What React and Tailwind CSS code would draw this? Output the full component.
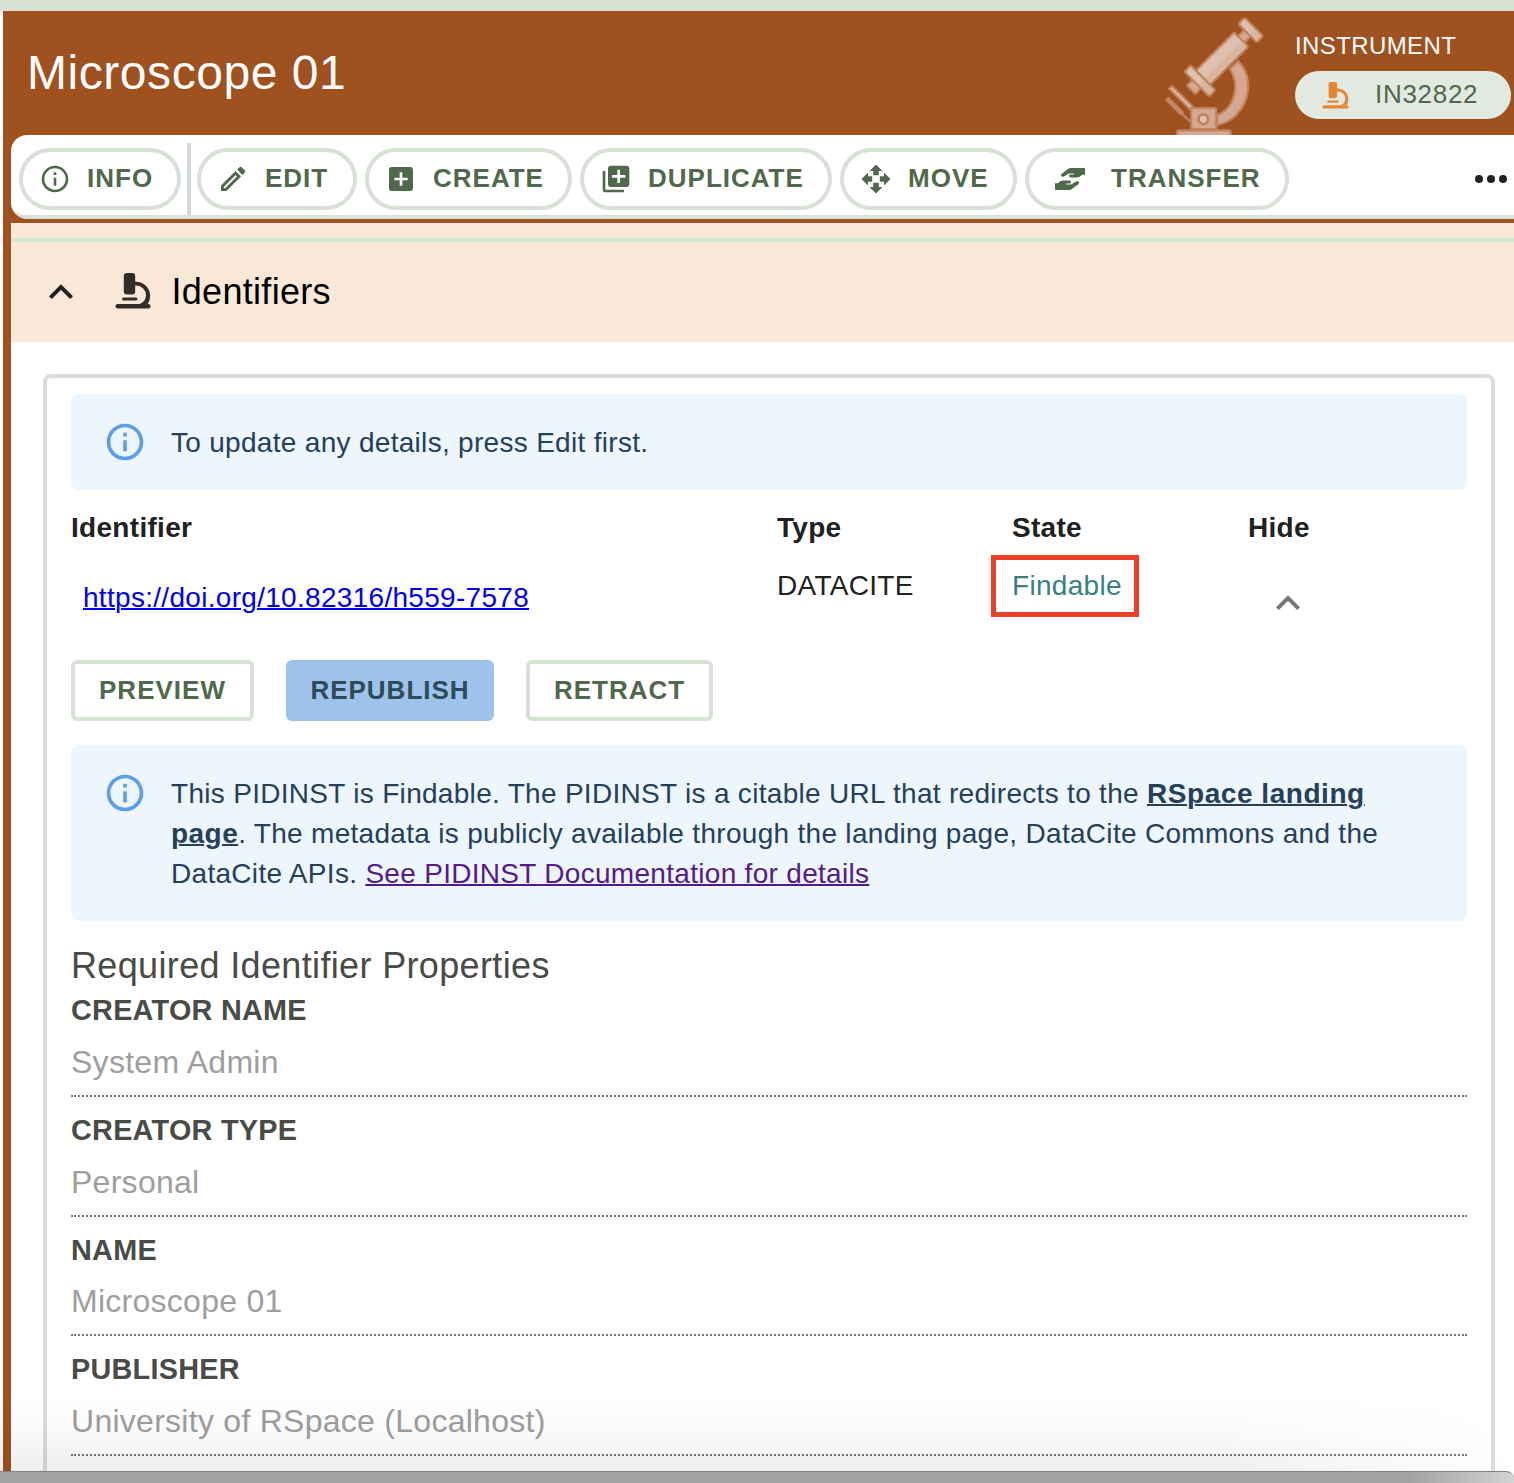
import React from "react";
import { MdInfoOutline, MdAddBox, MdLibraryAdd } from "react-icons/md";

const fields = [
  { label: "CREATOR NAME", value: "System Admin", row: "h-[120px]", box: "h-[110px]", gap: "mt-3" },
  { label: "CREATOR TYPE", value: "Personal", row: "h-[120px]", box: "h-[110px]", gap: "mt-3" },
  { label: "NAME", value: "Microscope 01", row: "h-[119px]", box: "h-[109px]", gap: "mt-[11px]" },
  { label: "PUBLISHER", value: "University of RSpace (Localhost)", row: "h-[120px]", box: "h-[110px]", gap: "mt-3" },
];

function SmallScope({ className }) {
  return (
    <svg viewBox="0 0 36 36" className={className} fill="currentColor">
      <rect x="8.8" y="0" width="11.4" height="21.5" rx="3" />
      <rect x="7" y="24.6" width="15.5" height="3" rx="1.5" />
      <path d="M19 8.8h2.5a14 14 0 0 1 12 20.6q-.5 1-1 1.600H24.500q6.500-2.500 6.500-9A9.700 9.700 0 0 0 21.500 12.600H19z" />
      <rect x="0.500" y="31" width="35" height="4.400" rx="2.200" />
    </svg>
  );
}

function BigScope() {
  return (
    <svg viewBox="0 0 110 120" className="h-[120px] w-[110px]" strokeLinejoin="round" strokeLinecap="round">
      <g stroke="#c0825f" strokeWidth="2.200">
        <path d="M78 46C91 58 91 80 81 94Q73 107 57 110V100Q66 97 71 88Q80 71 70 54Z" fill="#d4a891" />
        <path d="M9 73.500L12 71L33 91.500L30 94.500Z" fill="#dfc0ae" />
        <path d="M6.300 85L8.500 83L23 97.500L21 99.500Z" fill="#cf9a7e" />
        <path d="M22 98.500L31 107.500" fill="none" />
        <rect x="31.200" y="93.200" width="25" height="21" rx="1.500" fill="#d4a891" />
        <rect x="16.800" y="115.400" width="54" height="10" rx="2.500" fill="#d4a891" />
        <circle cx="43.300" cy="104.200" r="4.800" fill="#dfc0ae" strokeWidth="2.800" />
        <g transform="translate(55 50.700) rotate(45)">
          <rect x="-4.500" y="-47" width="9" height="12" fill="#d4a891" />
          <rect x="-6" y="24" width="12" height="10" rx="1.500" fill="#d4a891" />
          <rect x="-10" y="-37" width="20" height="54" rx="1.500" fill="#dfc0ae" />
          <path d="M2 -35.900H8.900V15.900H2Z" fill="#d9b49f" stroke="none" />
          <rect x="-13" y="-55" width="26" height="9" rx="2" fill="#dfc0ae" />
          <path d="M2 -53.900H11.900V-47.100H2Z" fill="#d9b49f" stroke="none" />
          <rect x="-17.500" y="17" width="35" height="8.800" rx="2" fill="#dfc0ae" />
          <path d="M2 18.100H16.400V24.700H2Z" fill="#d9b49f" stroke="none" />
        </g>
      </g>
    </svg>
  );
}

function PencilIcon() {
  return (
    <svg viewBox="0 0 32 32" className="mr-4 size-8" fill="currentColor">
      <path fillRule="evenodd" d="M4 28V22.600L18.600 8L24 13.400L9.400 28ZM6.800 25.200H8L20 13.400L18.600 12L6.800 23.900Z" />
      <path d="M20.100 6.500L22.800 4.100Q23.600 3.400 24.400 4.100L27.900 7.600Q28.600 8.400 27.900 9.200L25.500 11.900Z" />
    </svg>
  );
}

function MoveIcon() {
  return (
    <svg viewBox="0 0 30 30" className="size-[30px]" fill="currentColor">
      <path d="M15 0.500L21.500 7H17.800V11.200H12.200V7H8.500Z" />
      <path d="M15 29.500L21.500 23H17.800V18.800H12.200V23H8.500Z" />
      <path d="M0.500 15L7 8.500V12.200H11.200V17.800H7V21.500Z" />
      <path d="M29.500 15L23 8.500V12.200H18.800V17.800H23V21.500Z" />
    </svg>
  );
}

function TransferIcon() {
  return (
    <svg viewBox="0 0 30 22" className="h-[22px] w-[30px]" fill="currentColor">
      <defs>
        <path id="palm" d="M0 15.200H2.800Q5 12.600 8 12.600H14.500Q16.200 12.800 16 14.200Q15.800 15.400 14.600 15.400H11.200V16.400H16L21.500 13.300Q23.300 12.900 24 14.200Q24.300 15 23.600 15.900L17 21Q15.800 22 14.400 22H0Z" />
      </defs>
      <use href="#palm" />
      <use href="#palm" transform="rotate(180 15 11)" />
    </svg>
  );
}

function Chevron({ className }) {
  return (
    <svg viewBox="0 0 24 16" className={`h-4 w-6 ${className}`} fill="none" stroke="currentColor" strokeWidth="4">
      <path d="M1.400 13.600L12 3L22.600 13.600" />
    </svg>
  );
}

function Pill({ icon, children, className }) {
  return (
    <button className={`mt-[5px] flex h-[62px] shrink-0 items-center rounded-full border-4 border-[#d8e1d6] text-[26px] font-bold tracking-[1px] text-[#50694c] ${className}`}>
      {icon}
      <span className="-mt-0.5 whitespace-nowrap">{children}</span>
    </button>
  );
}

function Notice({ children, className }) {
  return (
    <div className={`flex rounded-lg bg-[#edf5fd] pl-8 text-[28px] leading-10 text-[#264059] ${className}`}>
      <MdInfoOutline className="mt-[26px] size-11 shrink-0 text-[#5a9eee]" />
      <div className="ml-6 mt-[29px] tracking-[0.3px]">{children}</div>
    </div>
  );
}

export default function App() {
  return (
    <div className="relative flex h-[1483px] w-[1514px] flex-col overflow-hidden bg-white font-['Liberation_Sans',Arial,sans-serif] text-[#212121]">
      <div className="h-[11px] shrink-0 bg-[#d8e1d6]" />
      <div className="ml-[3px] flex h-[1460px] shrink-0 flex-col bg-[#9f5120] pl-2">
        <header className="flex h-[124px] shrink-0 text-white">
          <h1 className="ml-4 mt-[34px] w-[1133px] shrink-0 text-[48px] leading-[56px] tracking-[0.550px]">Microscope 01</h1>
          <div className="h-[124px] w-[110px] shrink-0 overflow-hidden pt-1"><BigScope /></div>
          <div className="ml-[25px] mt-5 shrink-0">
            <div className="text-2xl leading-[30px] tracking-[0.400px]">INSTRUMENT</div>
            <div className="mt-2.5 flex h-12 w-[216px] items-center rounded-full bg-[#e1e9e0] pl-[27px] text-[26px] text-[#50694c]">
              <SmallScope className="size-[27px] text-[#e68532]" />
              <span className="-mt-0.5 ml-[26px] tracking-[0.700px]">IN32822</span>
            </div>
          </div>
        </header>
        <nav className="flex h-[84px] shrink-0 items-start rounded-l-2xl border-b-4 border-[#d8e1d6] bg-white pl-2 pt-2">
          <Pill className="w-[162px] pl-4" icon={<MdInfoOutline className="mr-4 size-8" />}>INFO</Pill>
          <div className="mx-1.5 h-[72px] w-1 shrink-0 bg-[#d5d9d5]" />
          <Pill className="w-[160px] pl-4" icon={<PencilIcon />}>EDIT</Pill>
          <Pill className="ml-2 w-[207px] pl-4" icon={<MdAddBox className="mr-4 size-8" />}>CREATE</Pill>
          <Pill className="ml-2 w-[252px] pl-4" icon={<MdLibraryAdd className="mr-4 size-8" />}>DUPLICATE</Pill>
          <Pill className="ml-2 w-[177px] pl-[17px]" icon={<span className="mr-[17px]"><MoveIcon /></span>}>MOVE</Pill>
          <Pill className="ml-2 w-[264px] pl-[26px]" icon={<span className="mr-[26px]"><TransferIcon /></span>}>TRANSFER</Pill>
          <svg viewBox="0 0 32 8" className="ml-[186px] mt-8 h-2 w-8 shrink-0" fill="#212121">
            <circle cx="4" cy="4" r="4" /><circle cx="16" cy="4" r="4" /><circle cx="28" cy="4" r="4" />
          </svg>
        </nav>
        <div className="mt-1 h-[15px] shrink-0 bg-[#f9e8d8]" />
        <div className="flex h-[104px] shrink-0 items-center border-t-4 border-[#d8e1d6] bg-[#f9e8d8]">
          <Chevron className="ml-[38px]" />
          <SmallScope className="-mt-0.5 ml-[42px] size-9 text-[#322d29]" />
          <h2 className="ml-[20.500px] text-[36px] tracking-[0.300px] text-black">Identifiers</h2>
        </div>
        <main className="flex min-h-0 flex-1 overflow-hidden bg-white pl-8 pt-8">
          <section className="h-[1200px] w-[1452px] rounded-lg border-4 border-[#d8e1d6] px-6 pt-4">
            <Notice className="h-24">To update any details, press Edit first.</Notice>
            <div className="grid h-[170px] grid-cols-[706px_235px_236px_1fr] pt-[18px] text-[28px] leading-10 tracking-[0.300px]">
              <div>
                <div className="font-bold">Identifier</div>
                <a className="ml-3 mt-[30px] block text-[#0000ee] underline decoration-2">https://doi.org/10.82316/h559-7578</a>
              </div>
              <div>
                <div className="font-bold">Type</div>
                <div className="mt-[18px]">DATACITE</div>
              </div>
              <div>
                <div className="font-bold">State</div>
                <div className="-ml-[21px] mt-[7px] flex h-[62px] w-[148px] border-[5px] border-[#eb4027] pl-4 pt-1.5 text-[#3a8080]">Findable</div>
              </div>
              <div>
                <div className="font-bold">Hide</div>
                <Chevron className="ml-7 mt-[47px] text-[#757575]" />
              </div>
            </div>
            <div className="flex gap-8 text-[26px] font-bold tracking-[1px] text-[#50694c]">
              <button className="h-[61px] w-[183px] rounded-md border-4 border-[#d8e1d6]">PREVIEW</button>
              <button className="h-[61px] w-[208px] rounded-md bg-[#9ec3eb] text-[#2f4a58]">REPUBLISH</button>
              <button className="h-[61px] w-[187px] rounded-md border-4 border-[#d8e1d6]">RETRACT</button>
            </div>
            <Notice className="mt-6 h-44">
              <p className="whitespace-nowrap">This PIDINST is Findable. The PIDINST is a citable URL that redirects to the <b className="tracking-[0.550px] underline decoration-2">RSpace landing</b></p>
              <p className="whitespace-nowrap"><b className="tracking-[0.450px] underline decoration-2">page</b>. The metadata is publicly available through the landing page, DataCite Commons and the</p>
              <p className="whitespace-nowrap">DataCite APIs. <a className="text-[#551a8b] underline decoration-2">See PIDINST Documentation for details</a></p>
            </Notice>
            <h3 className="mt-[22px] h-11 text-[36px] leading-[45px] tracking-[0.350px] text-[#484b46]">Required Identifier Properties</h3>
            {fields.map((f) => (
              <div key={f.label} className={f.row}>
                <div className={`border-b-2 border-dotted border-[#777] ${f.box}`}>
                  <div className="pt-[3px] text-[28.8px] font-bold leading-10 tracking-[0.270px] text-[#484b46]">{f.label}</div>
                  <div className={`text-[32px] leading-10 tracking-[0.270px] text-[#9e9e9e] ${f.gap}`}>{f.value}</div>
                </div>
              </div>
            ))}
          </section>
        </main>
      </div>
      <div className="pointer-events-none absolute bottom-3 left-0 h-20 w-full bg-linear-to-b from-transparent via-black/2 to-black/7 mask-r-from-80%" />
      <div className="h-3 shrink-0 rounded-tr-lg border-t border-[#828282] bg-linear-to-r from-[#a2a2a2] from-93% to-[#d4d4d4]" />
    </div>
  );
}
